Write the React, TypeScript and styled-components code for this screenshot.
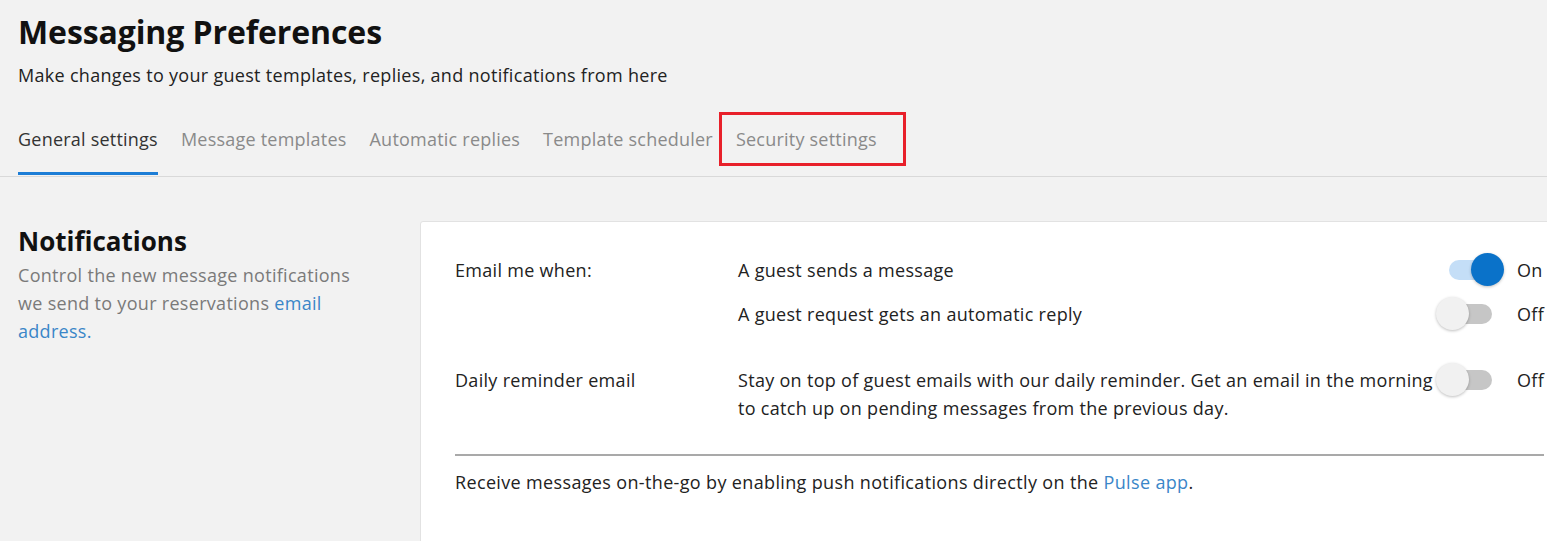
import React from "react";
import styled, { createGlobalStyle } from "styled-components";

const GlobalStyle = createGlobalStyle`
  html, body {
    margin: 0;
    padding: 0;
    background: #f2f2f2;
    overflow: hidden;
  }
  body {
    font-family: "Open Sans", "Noto Sans", sans-serif;
    color: #222;
  }
`;

const Page = styled.div`
  width: 1582px;
  height: 541px;
  overflow: hidden;
  background: #f2f2f2;
`;

const Header = styled.header`
  padding: 11px 0 0 18px;
`;

const Title = styled.h1`
  margin: 0;
  font-size: 32px;
  line-height: 42px;
  font-weight: 700;
  color: #111;
  letter-spacing: -0.1px;
`;

const Subtitle = styled.p`
  margin: 10px 0 0;
  font-size: 18px;
  line-height: 24px;
  letter-spacing: 0.3px;
  color: #222;
`;

const TabBar = styled.nav`
  display: flex;
  gap: 23px;
  margin-top: 40px;
  padding-left: 18px;
  border-bottom: 1px solid #d9d9d9;
`;

const Tab = styled.button<{ $active?: boolean; $highlight?: boolean }>`
  position: relative;
  background: none;
  border: none;
  padding: 0 0 25px;
  font-family: inherit;
  font-size: 18px;
  line-height: 24px;
  letter-spacing: 0.22px;
  color: ${({ $active }) => ($active ? "#333" : "#8a8a8a")};
  cursor: pointer;

  &::after {
    content: "";
    position: absolute;
    left: 0;
    right: 0;
    bottom: 1px;
    height: 3px;
    background: ${({ $active }) => ($active ? "#1c7dd6" : "transparent")};
  }

  ${({ $highlight }) =>
    $highlight &&
    `
    &::before {
      content: "";
      position: absolute;
      left: -17px;
      right: -29px;
      top: -15px;
      height: 48px;
      border: 3px solid #e8202a;
    }
  `}
`;

const Section = styled.section`
  display: flex;
  margin-top: 44px;
`;

const Aside = styled.div`
  width: 420px;
  flex-shrink: 0;
  padding-left: 18px;
  box-sizing: border-box;
`;

const SectionTitle = styled.h2`
  margin: 3px 0 0;
  font-size: 26px;
  line-height: 34px;
  font-weight: 700;
  color: #111;
`;

const SectionText = styled.p`
  margin: 3px 0 0;
  width: 340px;
  font-size: 18px;
  line-height: 28px;
  letter-spacing: 0.3px;
  color: #7a7a7a;
`;

const Link = styled.a`
  color: #3a86c8;
  text-decoration: none;
`;

const Card = styled.div`
  flex: 1;
  background: #fff;
  border: 1px solid #e2e2e2;
  border-radius: 3px;
  padding: 31px 37px 60px 34px;
`;

const SettingsGrid = styled.div`
  display: grid;
  grid-template-columns: 283px 1fr 108px;
  row-gap: 10px;
`;

const Label = styled.div<{ $gapTop?: boolean }>`
  font-size: 18px;
  line-height: 28px;
  letter-spacing: 0.3px;
  padding-top: 3px;
  color: #222;
  margin-top: ${({ $gapTop }) => ($gapTop ? "22px" : "0")};
`;

const Description = styled(Label)``;

const ToggleCell = styled.div<{ $gapTop?: boolean }>`
  display: flex;
  align-items: center;
  gap: 13px;
  height: 34px;
  margin-top: ${({ $gapTop }) => ($gapTop ? "22px" : "0")};
`;

const Switch = styled.span<{ $on: boolean }>`
  position: relative;
  width: 68px;
  height: 34px;
  flex-shrink: 0;

  &::before {
    content: "";
    position: absolute;
    left: 13px;
    top: 7px;
    width: 43px;
    height: 20px;
    border-radius: 10px;
    background: ${({ $on }) => ($on ? "#c4def7" : "#c6c6c6")};
  }

  &::after {
    content: "";
    position: absolute;
    top: 0;
    left: ${({ $on }) => ($on ? "35px" : "0")};
    width: 33px;
    height: 33px;
    border-radius: 50%;
    background: ${({ $on }) => ($on ? "#0a72c9" : "#f1f1f1")};
    box-shadow: 0 1px 3px rgba(0, 0, 0, 0.25);
  }
`;

const ToggleText = styled.span`
  font-size: 18px;
  line-height: 24px;
  letter-spacing: 0.3px;
  color: #222;
`;

const Divider = styled.hr`
  margin: 32px 0 0;
  border: none;
  border-top: 2px solid #a9a9a9;
`;

const Footnote = styled.p`
  margin: 12px 0 0;
  font-size: 18px;
  line-height: 28px;
  letter-spacing: 0.35px;
  color: #222;
`;

const tabs = [
  "General settings",
  "Message templates",
  "Automatic replies",
  "Template scheduler",
  "Security settings",
];

function Toggle({ on, gapTop }: { on: boolean; gapTop?: boolean }) {
  return (
    <ToggleCell $gapTop={gapTop}>
      <Switch $on={on} role="switch" aria-checked={on} />
      <ToggleText>{on ? "On" : "Off"}</ToggleText>
    </ToggleCell>
  );
}

export default function App() {
  return (
    <Page>
      <GlobalStyle />
      <Header>
        <Title>Messaging Preferences</Title>
        <Subtitle>
          Make changes to your guest templates, replies, and notifications from here
        </Subtitle>
      </Header>
      <TabBar>
        {tabs.map((t, i) => (
          <Tab key={t} $active={i === 0} $highlight={i === 4}>
            {t}
          </Tab>
        ))}
      </TabBar>
      <Section>
        <Aside>
          <SectionTitle>Notifications</SectionTitle>
          <SectionText>
            Control the new message notifications we send to your reservations{" "}
            <Link href="#">email address.</Link>
          </SectionText>
        </Aside>
        <Card>
          <SettingsGrid>
            <Label>Email me when:</Label>
            <Description>A guest sends a message</Description>
            <Toggle on />
            <Label />
            <Description>A guest request gets an automatic reply</Description>
            <Toggle on={false} />
            <Label $gapTop>Daily reminder email</Label>
            <Description $gapTop>
              Stay on top of guest emails with our daily reminder. Get an email in the
              morning to catch up on pending messages from the previous day.
            </Description>
            <Toggle on={false} gapTop />
          </SettingsGrid>
          <Divider />
          <Footnote>
            Receive messages on-the-go by enabling push notifications directly on the{" "}
            <Link href="#">Pulse app</Link>.
          </Footnote>
        </Card>
      </Section>
    </Page>
  );
}
